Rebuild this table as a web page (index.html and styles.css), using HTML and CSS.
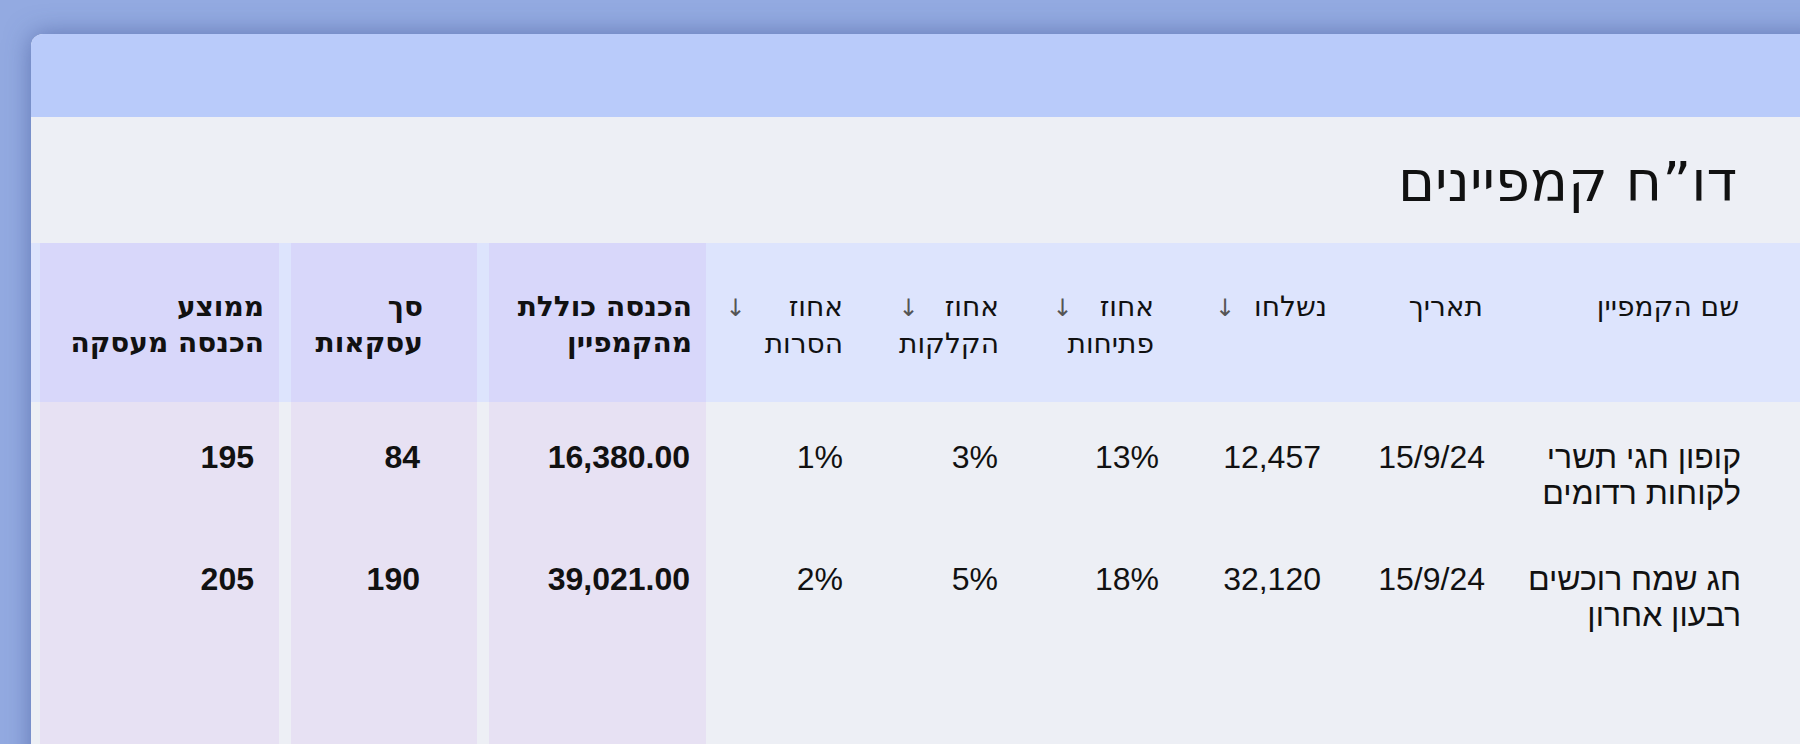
FILE: index.html
```html
<!DOCTYPE html>
<html lang="he" dir="rtl">
<head>
<meta charset="utf-8">
<title>דו"ח קמפיינים</title>
<link rel="stylesheet" href="styles.css">
</head>
<body>
<div class="page">
  <div class="card">
    <div class="card-top"></div>
    <div class="card-body">
      <h1 class="title">דו”ח קמפיינים</h1>
      <div class="table">
        <div class="row head">
          <div class="cell c-name">שם הקמפיין</div>
          <div class="cell c-date">תאריך</div>
          <div class="cell c-sent">נשלחו<span class="arr a-sent">↓</span></div>
          <div class="cell c-open">אחוז<span class="arr a-open">↓</span><br>פתיחות</div>
          <div class="cell c-click">אחוז<span class="arr a-click">↓</span><br>הקלקות</div>
          <div class="cell c-unsub">אחוז<span class="arr a-unsub">↓</span><br>הסרות</div>
          <div class="cell c-rev hl">הכנסה כוללת<br>מהקמפיין</div>
          <div class="cell c-deals hl">סך<br>עסקאות</div>
          <div class="cell c-avg hl">ממוצע<br>הכנסה מעסקה</div>
        </div>
        <div class="row data first">
          <div class="cell c-name">קופון חגי תשרי<br>לקוחות רדומים</div>
          <div class="cell c-date">15/9/24</div>
          <div class="cell c-sent">12,457</div>
          <div class="cell c-open">13%</div>
          <div class="cell c-click">3%</div>
          <div class="cell c-unsub">1%</div>
          <div class="cell c-rev hl">16,380.00</div>
          <div class="cell c-deals hl">84</div>
          <div class="cell c-avg hl">195</div>
        </div>
        <div class="row data">
          <div class="cell c-name">חג שמח רוכשים<br>רבעון אחרון</div>
          <div class="cell c-date">15/9/24</div>
          <div class="cell c-sent">32,120</div>
          <div class="cell c-open">18%</div>
          <div class="cell c-click">5%</div>
          <div class="cell c-unsub">2%</div>
          <div class="cell c-rev hl">39,021.00</div>
          <div class="cell c-deals hl">190</div>
          <div class="cell c-avg hl">205</div>
        </div>
        <div class="row data filler">
          <div class="cell c-name"></div>
          <div class="cell c-date"></div>
          <div class="cell c-sent"></div>
          <div class="cell c-open"></div>
          <div class="cell c-click"></div>
          <div class="cell c-unsub"></div>
          <div class="cell c-rev hl"></div>
          <div class="cell c-deals hl"></div>
          <div class="cell c-avg hl"></div>
        </div>
      </div>
    </div>
  </div>
</div>
</body>
</html>
```

FILE: styles.css
```css
html, body {
  margin: 0;
  padding: 0;
}
body {
  background: #93aae1;
  overflow: hidden;
  height: 744px;
  font-family: "DejaVu Sans", sans-serif;
  color: #111;
}
.page {
  padding: 34px 0 0 31px;
  direction: ltr;
}
.card {
  width: 1800px;
  border-radius: 12px 12px 0 0;
  overflow: hidden;
  background: #edeff5;
  box-shadow: 0 0 26px rgba(55, 75, 140, 0.55);
  direction: rtl;
}
.card-top {
  height: 83px;
  background: #b9cbfa;
}
.card-body {
  background: #edeff5;
}
.title {
  margin: 0;
  padding: 33px 94px 29px 0;
  font-family: "DejaVu Sans", sans-serif;
  font-weight: normal;
  font-size: 56px;
  line-height: 64px;
  color: #111;
}
.row {
  display: grid;
  grid-template-columns: 331px 160px 170px 155px 155px 154px 229px 198px 248px;
}
.head {
  background: #dde4fd;
  height: 159px;
}
.cell {
  text-align: right;
}
.head .cell {
  font-family: "DejaVu Sans", sans-serif;
  font-size: 28px;
  line-height: 36px;
  padding-top: 46px;
}
.data .cell {
  font-family: "Liberation Sans", Arial, sans-serif;
  font-size: 32px;
  line-height: 36px;
  padding-top: 25px;
  padding-bottom: 25px;
}
.data.first .cell {
  padding-top: 37px;
}
.filler .cell {
  height: 80px;
}
.hl {
  border-left: 12px solid transparent;
  background-clip: padding-box;
  font-weight: bold;
}
.head .hl {
  background-color: #d8d7fa;
}
.data .hl {
  background-color: #e7e1f3;
}
.c-avg {
  border-left-width: 9px;
}
.arr {
  display: inline-block;
  color: #555;
  font-size: 24px;
  font-weight: normal;
}
.a-sent { margin-right: 19px; }
.a-open { margin-right: 27px; }
.a-click { margin-right: 26px; }
.a-unsub { margin-right: 43px; }

/* header paddings (right side, RTL) */
.head .c-name { padding-right: 92px; }
.head .c-date { padding-right: 17px; }
.head .c-sent { padding-right: 13px; }
.head .c-open { padding-right: 16px; }
.head .c-click { padding-right: 16px; }
.head .c-unsub { padding-right: 17px; }
.head .c-rev { padding-right: 14px; }
.head .c-deals { padding-right: 54px; }
.head .c-avg { padding-right: 15px; }

/* data paddings */
.data .c-name { padding-right: 90px; }
.data .c-date { padding-right: 15px; }
.data .c-sent { padding-right: 19px; }
.data .c-open { padding-right: 11px; }
.data .c-click { padding-right: 17px; }
.data .c-unsub { padding-right: 17px; }
.data .c-rev { padding-right: 16px; }
.data .c-deals { padding-right: 57px; }
.data .c-avg { padding-right: 25px; }
```
